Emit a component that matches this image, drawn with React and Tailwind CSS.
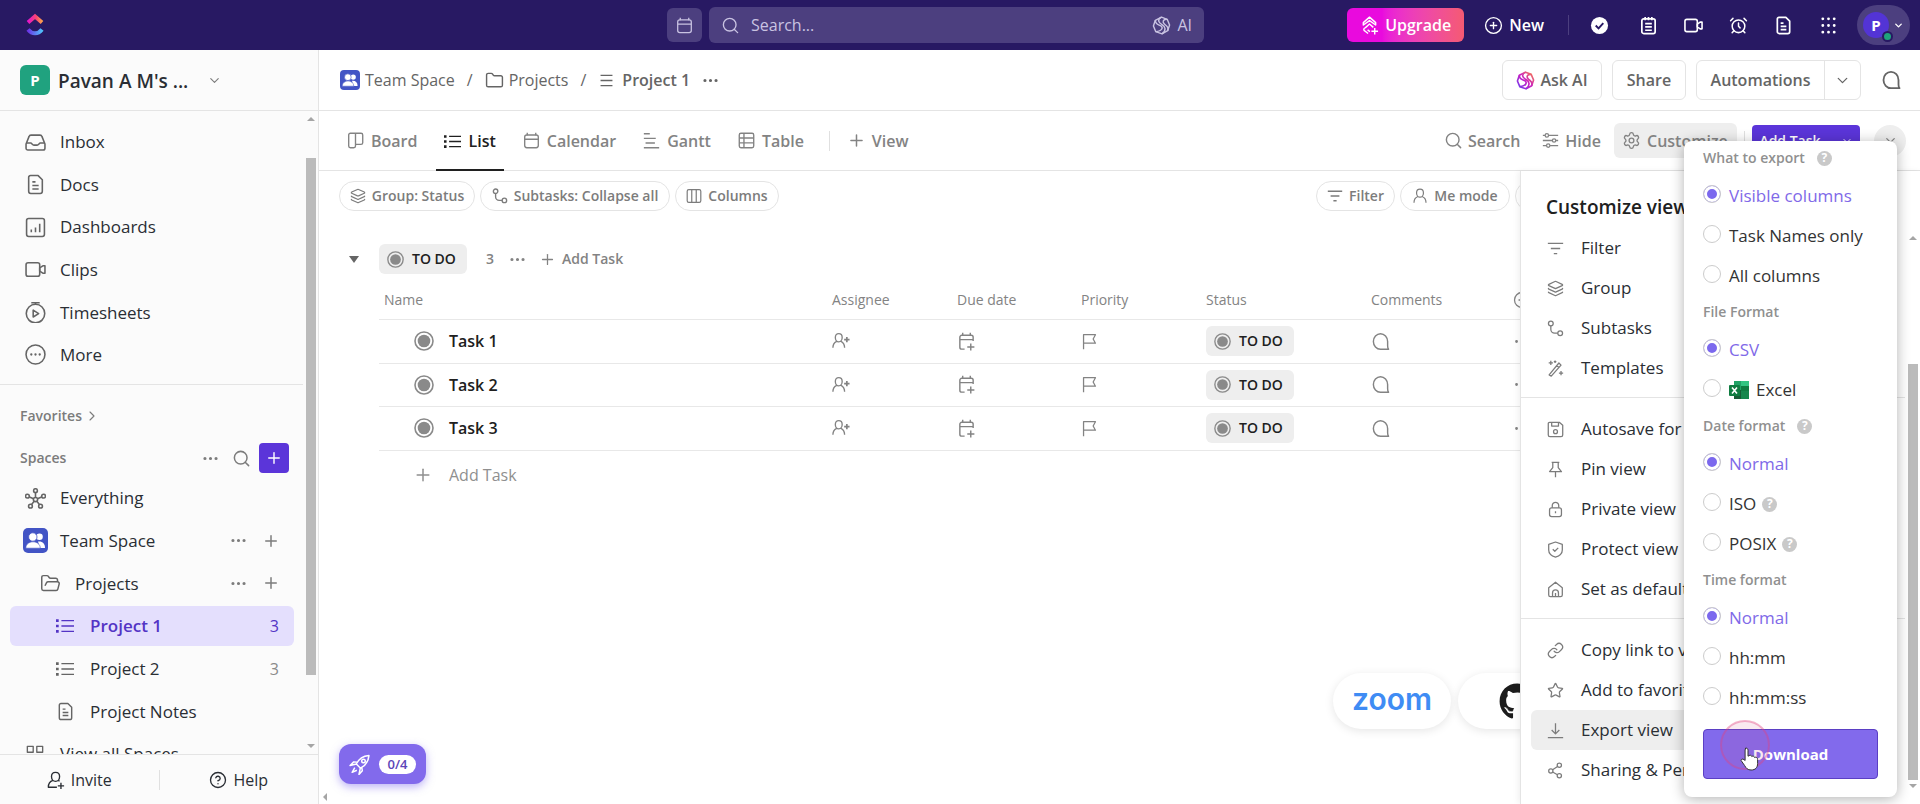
import { useState } from "react";
import {
    AlarmClock, ChevronDown, ChevronRight, CircleHelp, CirclePlus, Ellipsis, Folder, FolderOpen, Layers,
    Link, Plus, Search, Settings, Star,
} from "lucide-react";
import { FaGithub } from "react-icons/fa";

const paths = {
    inbox: <><path d="M1 11.500 3.800 4.400A2 2 0 0 1 5.700 3h8.600a2 2 0 0 1 1.900 1.400L19 11.500V15.500a1.700 1.700 0 0 1-1.700 1.700H2.700A1.700 1.700 0 0 1 1 15.500Z" /><path d="M1.500 10.500h4c1 0 1.500 2 3 2h3c1.500 0 2-2 3-2h4" /></>,
    doc: <><path d="M5.200 1.500h7.300L16.500 5.500V16.500a2 2 0 0 1-2 2h-9a2 2 0 0 1-2-2V3.200A1.700 1.700 0 0 1 5.200 1.500Z" /><path d="M7 7.500h3M7 11h6M7 14.300h6" /></>,
    dashboard: <><rect x="1.500" y="1.500" width="17" height="17" rx="2" /><path d="M6 12v2.500M10 10v4.500M14 6.500v8" /></>,
    video: <><rect x="1" y="3.500" width="13" height="13" rx="2" /><path d="M14 8.500 17 6.500h2v7h-2l-3-2Z" /></>,
    timesheet: <><circle cx="10" cy="11" r="8.800" /><path d="M6 .600h8M10 .600v2M7.800 7.700v6.600l5.200-3.300Z" /></>,
    more: <><circle cx="10" cy="10" r="9" /><path strokeWidth="2.200" strokeLinecap="round" d="M6 10h.01M10 10h.01M14 10h.01" /></>,
    everything: <><circle cx="10" cy="11" r="2" /><circle cx="10" cy="2.500" r="1.800" /><circle cx="2.300" cy="7.800" r="1.800" /><circle cx="17.700" cy="7.800" r="1.800" /><circle cx="5.200" cy="17.300" r="1.800" /><circle cx="14.800" cy="17.300" r="1.800" /><path d="M10 4.500V9M4.200 8.500l4 1.700M15.800 8.500l-4 1.700M6.300 15.700l2.400-3M13.700 15.700l-2.400-3" /></>,
    list: <><path d="M6 4h14M6 10h14M6 16h14" /><path strokeWidth="3" d="M0 4h3M0 10h3M0 16h3" /></>,
    lines: <path d="M3 4h14M3 10h14M3 16h14" />,
    spaces: <><rect x="1.500" y="1.500" width="6.500" height="6.500" /><rect x="12" y="1.500" width="6.500" height="6.500" /><rect x="1.500" y="12" width="6.500" height="6.500" /><rect x="12" y="12" width="6.500" height="6.500" /></>,
    board: <path d="M10 1.500h6.500a2 2 0 0 1 2 2v9a2 2 0 0 1-2 2H10ZM10 1.500H4a2 2 0 0 0-2 2v13a2 2 0 0 0 2 2h4a2 2 0 0 0 2-2Z" />,
    calendar: <><rect x="2" y="3.500" width="16" height="15" rx="2.500" /><path d="M2 8.500h16M5 .800v3M15 .800v3" /></>,
    calendarPlus: <><path d="M17 9.500V5.500A2 2 0 0 0 15 3.500H5a2 2 0 0 0-2 2V16a2 2 0 0 0 2 2h3M3 8h14M6 .800v3M14 .800v3M14.500 12v7.500M10.800 15.800h7.500" /></>,
    gantt: <path d="M1 2h7M1 7.500h14M3 13h11M1 18.500h18" />,
    table: <><rect x="1.500" y="1.500" width="17" height="17" rx="2" /><path d="M1.500 7h17M1.500 12.800h17M7 1.500v17" /></>,
    columns: <><rect x="1.500" y="2" width="17" height="16" rx="2" /><path d="M7.200 2v16M12.800 2v16" /></>,
    filter: <path d="M1 4h18M4.500 10h11M8 16h4" />,
    subtasks: <><circle cx="4.500" cy="4" r="2.800" /><circle cx="15.500" cy="15.500" r="2.800" /><path d="M4.500 6.800V11a4.500 4.500 0 0 0 4.500 4.500h3.700" /></>,
    sliders: <><path d="M1 4h2.500M8 4h11M1 10h11M16.500 10H19M1 16h4M9.500 16H19" /><circle cx="5.700" cy="4" r="2" /><circle cx="14.200" cy="10" r="2" /><circle cx="7.300" cy="16" r="2" /></>,
    user: <path d="M10 1.500c2.800 0 4.300 2 4.300 4.700S12.500 11.500 10 11.500 5.700 9 5.700 6.200 7.200 1.500 10 1.500ZM7 11c-3 1-4.500 3.500-4.500 7.500M13 11c3 1 4.500 3.500 4.500 7.500" />,
    userPlus: <><path d="M7.500 1.800c2.500 0 3.800 1.800 3.800 4.200S9.800 11 7.500 11 3.700 8.500 3.700 6 5 1.800 7.500 1.800ZM5 10.500C2.300 12 1 14 1 17.500M10 10.500c2.700 1.500 4 3.500 4 7" /><path strokeWidth="1.900" d="M16.500 5.500v6M13.500 8.500h6" /></>,
    invite: <path d="M9.500 1.500c3 0 4.500 2 4.500 4.500 0 3-1.800 5.500-4.500 5.500S5 9 5 6c0-2.500 1.500-4.500 4.500-4.500ZM6.500 10.500C3.500 11.500 1.500 14 1.500 18H11M12.500 10.500 14 11.300M15.500 13v7M12 16.500h7" />,
    flag: <path d="M3 19V2h14l-2.700 5L17 12H3" />,
    chat: <path d="M17.500 14.500V10A7.500 8.200 0 1 0 10 18.200h8.500c-.7-.8-1-2-1-3.700Z" />,
    home: <path d="M2 8l8-6.500L18 8v8.500a2 2 0 0 1-2 2H4a2 2 0 0 1-2-2ZM6.500 18v-4a3.500 3.500 0 0 1 7 0v4M10 14v4" />,
    download: <path d="M10 1.500v12M5.500 9.500l4.500 4.500 4.500-4.500M1 18.500h18" />,
    save: <><path d="M3 1.500h11.500L18.500 5v11.500a2 2 0 0 1-2 2h-13a2 2 0 0 1-2-2V3A1.500 1.500 0 0 1 3 1.500ZM5.500 1.500V6h8V1.500" /><circle cx="10" cy="12.500" r="2.300" /></>,
    pin: <path d="M5.500 1.500h9M6.800 1.500v6.200L3 12.500h14l-3.800-4.800V1.500M10 12.500v6.500" />,
    lock: <><rect x="3" y="8" width="14" height="10.500" rx="2.500" /><path d="M6.200 8V5.300a3.800 3.800 0 0 1 7.600 0V8M10 12v2.500" /></>,
    shield: <path d="M10 1.200 18 4v6.500c0 4-3.500 7-8 8.500-4.500-1.500-8-4.500-8-8.500V4ZM6.800 9.800l2.400 2.300 4-4" />,
    share: <><circle cx="14.500" cy="3.800" r="2.500" /><circle cx="4.500" cy="10.500" r="2.500" /><circle cx="14.500" cy="16.200" r="2.500" /><path d="m6.600 9.100 5.800-3.900M6.600 11.700l5.700 3.300" /></>,
    wand: <path d="M2.500 17.500 14 3.500l2.500 2.500L5 19ZM11.500 6.500l2.500 2.500M4.500 1v5M2 3.500h5M9.500.5v3M8 2h3M16.500 13v5M14 15.500h5" />,
    rocket: <><path d="M7 9.500C9.500 4.500 13.500 2 19 1.500c-.5 5.500-3 9.500-8 12ZM7 9.500l4 4M8 7.800 4.500 7.500 1 11l6-1.500M12.200 12.700l.5 3.300L9.500 19.500l1.200-5.700M5.500 13 3 17.500l4.500-2" /><circle cx="13.800" cy="6.700" r="1.700" /></>,
    ai: <><path d="M10 1.200 16 3.500 18.500 9.500 16.500 15.500 10.500 18.800 4 16.500 1.500 10.500 3.500 4.500Z" strokeLinejoin="round" /><path d="M10 1.200C5 4 7 7 10.500 9s5 6 0 9.800M3.500 4.500c0 5 4 4.500 6 6s2 5-5.500 6M16 3.500c-5 0-5 3-3 5s5 2.500 3.500 7" /></>,
    notepad: <><rect x="3" y="3" width="14" height="15.500" rx="2" /><path d="M6.500 1v3.500M10 1v3.500M13.500 1v3.500M6.500 8h7M6.500 11.500h7M6.500 15h7" /></>,
    upgrade: <path d="M3.500 9.500V7L10 1.200 16.500 7v2.500L10 4.800ZM5.500 12.500 10 8.500l4 3.500M5.500 12.500c-2 .5-2 3 0 3.500l3 2.500M8 14.500c1 1 1.500 1.500 2.500 2M15.500 12.500v7M12 16h7" />,
};

function Icon({ name, size = "size-4", color = "", width = 1.500 }) {
    return (
        <svg viewBox="0 0 20 20" fill="none" stroke="currentColor" strokeWidth={width} strokeLinejoin="round" aria-hidden="true"
            className={`shrink-0 ${size} ${color}`}>{paths[name]}</svg>
    );
}

function StatusDot({ className }) {
    return (
        <svg viewBox="0 0 20 20" className={`shrink-0 text-[#8a8a8a] ${className}`} aria-hidden="true">
            <circle cx="10" cy="10" r="9" fill="none" stroke="currentColor" strokeWidth="1.600" />
            <circle cx="10" cy="10" r="6.300" fill="currentColor" />
        </svg>
    );
}

function TeamIcon({ className }) {
    return (
        <svg viewBox="0 0 25 25" className={`shrink-0 ${className}`} aria-hidden="true">
            <rect width="25" height="25" rx="5" fill="#4254c5" />
            <g fill="#fff">
                <circle cx="16.500" cy="8.800" r="3.300" /><path d="M15 13.500c4.500-.5 7 2 7 6.500h-5Z" />
                <circle cx="9.800" cy="9" r="4.200" stroke="#4254c5" strokeWidth=".8" />
                <path d="M2.800 20.200c0-8.500 14.500-8.500 14.500 0Z" stroke="#4254c5" strokeWidth=".6" />
            </g>
        </svg>
    );
}

function Arrow({ dir }) {
    const d = { up: "M0 6 4 2l4 4Z", down: "M0 2h8L4 6Z", left: "M6 0v8L2 4Z" };
    return <svg viewBox="0 0 8 8" className="size-2 fill-[#a5a5a5]" aria-hidden="true"><path d={d[dir]} /></svg>;
}

function TopBar() {
    return (
        <header className="grid h-[50px] shrink-0 grid-cols-[1fr_auto_1fr] items-center bg-[#281963] text-white">
            <a href="#home" aria-label="Home" className="ml-[25px] w-5">
                <svg viewBox="0 0 20 24" className="h-6 w-5">
                    <defs>
                        <linearGradient id="logoTop"><stop stopColor="#e614cb" /><stop offset=".6" stopColor="#f8486f" /><stop offset="1" stopColor="#fca34d" /></linearGradient>
                        <linearGradient id="logoBottom"><stop stopColor="#6b35e8" /><stop offset="1" stopColor="#50c0fc" /></linearGradient>
                    </defs>
                    <path d="M3 9.500 10 3.500l7 6" fill="none" stroke="url(#logoTop)" strokeWidth="4" />
                    <path d="M3 16.500c4 5 10 5 14 0" fill="none" stroke="url(#logoBottom)" strokeWidth="4" />
                </svg>
            </a>
            <div className="mr-[49px] flex items-center gap-[7px]">
                <button aria-label="Calendar" className="flex h-[34px] w-[35px] items-center justify-center rounded-md bg-[#4c3f7f] text-[#c9c3e2]"><Icon name="calendar" size="size-[17px]" /></button>
                <div className="flex h-9 w-[495px] items-center rounded-md bg-[#4c3f7f] px-3 text-[#c9c3e2]">
                    <Search className="size-[19px]" strokeWidth={1.700} />
                    <input aria-label="Search" placeholder="Search..." className="ml-[11px] min-w-0 flex-1 bg-transparent text-base outline-none placeholder:text-[#c9c3e2]" />
                    <button className="flex items-center gap-[6px] text-base"><Icon name="ai" size="size-[19px]" />AI</button>
                </div>
            </div>
            <div className="flex items-center justify-end pr-[10px]">
                <button className="flex h-[34px] w-[117px] items-center justify-center gap-[6px] rounded-md bg-linear-to-r from-[#e90ade] from-30% to-[#f55a72] text-base font-semibold"><Icon name="upgrade" size="size-[19px]" />Upgrade</button>
                <button className="ml-5 flex items-center gap-[6px] text-base font-semibold"><CirclePlus className="size-[19px]" strokeWidth={1.700} />New</button>
                <span className="ml-6 h-5 w-px bg-[#4c3f7f]" />
                <div className="ml-[21px] flex items-center gap-[26px]">
                    <button aria-label="Tasks" className="mr-1 block"><svg viewBox="0 0 20 20" className="size-[19px]"><circle cx="10" cy="10" r="9" fill="#fff" /><path d="m6 10 3 3 5-5.500" fill="none" stroke="#281963" strokeWidth="2" /></svg></button>
                    <button aria-label="Notepad"><Icon name="notepad" size="size-[19px]" width={1.800} /></button>
                    <button aria-label="Record"><Icon name="video" size="size-[19px]" width={1.700} /></button>
                    <button aria-label="Reminders"><AlarmClock className="size-[19px]" strokeWidth={1.900} /></button>
                    <button aria-label="Docs"><Icon name="doc" size="size-[19px]" width={1.800} /></button>
                    <button aria-label="Apps"><svg viewBox="0 0 20 20" className="size-[19px]"><path d="M4 3h.01M10 3h.01M16 3h.01M4 10h.01M10 10h.01M16 10h.01M4 17h.01M10 17h.01M16 17h.01" stroke="#fff" strokeWidth="3" strokeLinecap="round" /></svg></button>
                </div>
                <button aria-label="Account" className="ml-[19px] flex h-10 w-[53px] items-center justify-between rounded-full bg-[#4c3f7f] px-[6px]">
                    <span className="relative flex size-[26px] items-center justify-center rounded-full bg-[#5334d5] text-[15px] font-bold">P
                        <span className="absolute -right-1 -bottom-1 size-[11px] rounded-full border-2 border-[#281963] bg-[#1fa37c]" /></span>
                    <ChevronDown className="size-[11px]" strokeWidth={3} />
                </button>
            </div>
        </header>
    );
}

const navItems = [
    ["Inbox", "inbox"], ["Docs", "doc"], ["Dashboards", "dashboard"], ["Clips", "video"], ["Timesheets", "timesheet"], ["More", "more"],
];

function RowActions() {
    return (
        <span className="ml-auto flex items-center gap-[14px] pr-[14px] text-[#7c7c7c]">
            <button aria-label="Options"><Ellipsis className="size-[19px]" strokeWidth={2} /></button>
            <button aria-label="Add"><Plus className="size-[18px]" strokeWidth={2} /></button>
        </span>
    );
}

function Sidebar() {
    return (
        <aside className="flex w-[319px] shrink-0 flex-col border-r border-[#e4e4e4] bg-[#fbfbfb] text-[#2a2e34]">
            <button className="flex h-[61px] shrink-0 items-center border-b border-[#e4e4e4] pl-5">
                <span className="flex size-[30px] items-center justify-center rounded-md bg-[#20a27f] text-[15px] font-bold text-white">P</span>
                <span className="ml-2 w-[149px] pt-[3px] text-left text-[19px] font-semibold whitespace-nowrap">Pavan A M's ...</span>
                <ChevronDown className="size-[15px] text-[#7c7c7c]" strokeWidth={1.800} />
            </button>
            <div className="flex min-h-0 flex-1">
                <div className="min-w-0 flex-1 overflow-hidden text-[17px]">
                    <nav className="flex h-[274px] flex-col justify-between border-b border-[#e4e4e4] pt-[11px] pb-[9px]">
                        {navItems.map(([label, icon]) => (
                            <a key={label} href="#nav" className="flex h-10 items-center gap-[14px] pl-[25px]">
                                <Icon name={icon} size="size-[21px]" color="text-[#656565]" />{label}
                            </a>
                        ))}
                    </nav>
                    <button className="mt-[19px] flex h-6 items-center gap-[2px] pl-5 text-sm font-semibold text-[#7c7c7c]">Favorites <ChevronRight className="size-4" strokeWidth={1.700} /></button>
                    <div className="mt-[15px] flex h-[30px] items-center pr-[14px] pl-5 text-[#7c7c7c]">
                        <h2 className="flex-1 text-sm font-semibold">Spaces</h2>
                        <button aria-label="Space options"><Ellipsis className="size-[19px]" /></button>
                        <button aria-label="Search spaces" className="ml-3"><Search className="size-[19px]" strokeWidth={1.900} /></button>
                        <button aria-label="New space" className="ml-[8px] flex size-[30px] items-center justify-center rounded bg-[#5b35d9] text-white"><Plus className="size-[18px]" strokeWidth={1.900} /></button>
                    </div>
                    <ul className="mt-[5px] flex h-[296px] flex-col justify-between pr-[9px] [&>li]:flex [&>li]:h-10 [&>li]:items-center">
                        <li className="pl-[25px]"><Icon name="everything" size="size-[21px]" color="text-[#656565]" /><a href="#e" className="ml-[14px]">Everything</a></li>
                        <li className="pl-[23px]"><TeamIcon className="size-[25px]" /><a href="#t" className="ml-3">Team Space</a><RowActions /></li>
                        <li className="pl-[40px]"><FolderOpen className="size-[21px] text-[#656565]" strokeWidth={1.700} /><a href="#p" className="ml-[14px]">Projects</a><RowActions /></li>
                        <li className="ml-[10px] rounded-md bg-[#e4dffd] pr-[15px] pl-[46px] text-[#5334c5]"><Icon name="list" size="size-[18px]" /><a href="#p1" className="ml-[16px] flex-1 font-semibold">Project 1</a><span className="text-base">3</span></li>
                        <li className="pr-[15px] pl-[56px]"><Icon name="list" size="size-[18px]" color="text-[#656565]" /><a href="#p2" className="ml-[16px] flex-1">Project 2</a><span className="text-base text-[#8a8a8a]">3</span></li>
                        <li className="pl-[56px]"><Icon name="doc" size="size-[19px]" color="text-[#656565]" /><a href="#n" className="ml-[15px]">Project Notes</a></li>
                        <li className="shrink-0 pl-[26px]"><Icon name="spaces" size="size-[18px]" color="text-[#656565]" /><a href="#v" className="ml-4">View all Spaces</a></li>
                    </ul>
                </div>
                <div className="flex w-[15px] shrink-0 flex-col items-center justify-between pt-1 pb-1">
                    <Arrow dir="up" />
                    <div className="mt-[35px] mb-[67px] w-[10px] flex-1 bg-[#bbb]" />
                    <Arrow dir="down" />
                </div>
            </div>
            <div className="flex h-[50px] shrink-0 items-center border-t border-[#e4e4e4] text-base">
                <button className="flex flex-1 items-center justify-center gap-[6px]"><Icon name="invite" size="size-[18px]" />Invite</button>
                <span className="h-5 w-px bg-[#e0e0e0]" />
                <button className="flex flex-1 items-center justify-center gap-[6px]"><CircleHelp className="size-[18px]" strokeWidth={1.800} />Help</button>
            </div>
        </aside>
    );
}

function Breadcrumb() {
    const box = "flex h-10 items-center rounded-md border border-[#e4e4e4]";
    return (
        <div className="flex h-[61px] shrink-0 items-center border-b border-[#e4e4e4] pr-[19px] pl-[21px] text-base text-[#656565]">
            <a href="#t" className="flex items-center gap-[5px]"><TeamIcon className="size-5" />Team Space</a>
            <span className="mx-3">/</span>
            <a href="#p" className="flex items-center gap-[5px]"><Folder className="size-[19px]" strokeWidth={1.800} />Projects</a>
            <span className="mx-3">/</span>
            <a href="#p1" className="flex items-center gap-[7px] font-semibold"><Icon name="lines" size="size-[17px]" />Project 1</a>
            <button aria-label="Options" className="ml-[11px]"><Ellipsis className="size-[19px]" /></button>
            <div className="ml-auto flex items-center gap-[10px] font-semibold">
                <button className={`${box} w-[100px] justify-center gap-[5px]`}>
                    <svg viewBox="0 0 20 20" fill="none" stroke="url(#aiColor)" strokeWidth="1.700" className="size-[19px]" aria-hidden="true">
                        <defs><linearGradient id="aiColor" gradientUnits="userSpaceOnUse" x1="2" y1="18" x2="18" y2="2"><stop stopColor="#6d3df0" /><stop offset=".5" stopColor="#c81ec2" /><stop offset="1" stopColor="#f77b52" /></linearGradient></defs>
                        {paths.ai}
                    </svg>
                    Ask AI
                </button>
                <button className={`${box} w-[74px] justify-center`}>Share</button>
                <div className={box}>
                    <button className="w-[127px]">Automations</button>
                    <button aria-label="More automations" className="flex h-full w-9 items-center justify-center border-l border-[#e4e4e4]"><ChevronDown className="size-[17px]" strokeWidth={1.800} /></button>
                </div>
                <button aria-label="Comments" className="ml-[10px]"><Icon name="chat" size="size-5" width={1.800} /></button>
            </div>
        </div>
    );
}

function ViewTabs() {
    const tabs = [["Board", "board"], ["List", "list"], ["Calendar", "calendar"], ["Gantt", "gantt"], ["Table", "table"]];
    return (
        <div className="flex h-[60px] shrink-0 items-center border-b border-[#e4e4e4] pr-[14px] pl-5 text-base font-semibold text-[#838383]">
            <div className="flex h-full gap-[11px]">
                {tabs.map(([label, icon]) => (
                    <button key={label} className={label === "List" ? "-mb-px flex h-[60px] items-center gap-[7px] border-b-2 border-[#202020] px-2 pt-[2px] text-[#202020]" : "flex items-center gap-[7px] px-2"}>
                        <Icon name={icon} size="size-[17px]" width={1.600} />{label}
                    </button>
                ))}
            </div>
            <span className="mx-[17px] h-5 w-px bg-[#e0e0e0]" />
            <button className="flex items-center gap-[6px]"><Plus className="size-[19px]" strokeWidth={1.900} />View</button>
            <div className="ml-auto flex items-center">
                <button className="flex items-center gap-[5px]"><Search className="size-[19px]" strokeWidth={1.800} />Search</button>
                <button className="ml-[22px] flex items-center gap-[6px]"><Icon name="sliders" size="size-[17px]" />Hide</button>
                <button className="ml-[13px] flex h-[35px] w-[123px] items-center gap-[6px] rounded-md bg-[#eee] pl-2"><Settings className="size-[19px]" strokeWidth={1.700} />Customize</button>
                <span className="mx-[7px] h-5 w-px bg-[#e0e0e0]" />
                <button className="flex h-[31px] w-[108px] items-center justify-center gap-5 rounded bg-[#5b35d9] text-sm text-white">Add Task <ChevronDown className="size-3" /></button>
                <button aria-label="Collapse" className="ml-[14px] flex size-8 items-center justify-center rounded-full bg-[#eee]"><ChevronDown className="size-[15px]" /></button>
            </div>
        </div>
    );
}

const tasks = ["Task 1", "Task 2", "Task 3"];

function StatusBadge() {
    return <span className="flex h-[30px] w-[88px] items-center gap-2 rounded-md bg-[#eee] pl-2 text-sm font-semibold text-[#202020]"><StatusDot className="size-[17px]" />TO DO</span>;
}

function ListView() {
    const chip = "flex h-[30px] items-center justify-center gap-[6px] rounded-full border border-[#e4e4e4] whitespace-nowrap";
    return (
        <div className="min-h-0 flex-1 overflow-hidden">
            <div className="flex items-center gap-[5px] pt-[10px] pl-5 text-sm font-semibold text-[#7c7c7c]">
                <button className={`${chip} w-[136px]`}><Layers className="size-4" strokeWidth={1.800} />Group: Status</button>
                <button className={`${chip} w-[190px]`}><Icon name="subtasks" width={1.700} />Subtasks: Collapse all</button>
                <button className={`${chip} w-[104px]`}><Icon name="columns" />Columns</button>
                <div className="mr-[309px] ml-auto flex gap-[5px]">
                    <button className={`${chip} w-[79px]`}><Icon name="filter" width={1.700} />Filter</button>
                    <button className={`${chip} w-[110px]`}><Icon name="user" />Me mode</button>
                    <button aria-label="Show closed" className={`${chip} w-[96px]`} />
                </div>
            </div>
            <div className="mt-[33px] flex h-[30px] items-center pl-[30px] text-sm font-semibold text-[#838383]">
                <button aria-label="Collapse group" className="mr-5"><svg viewBox="0 0 10 8" className="h-2 w-[10px] fill-[#656565]"><path d="M0 1h10L5 8Z" /></svg></button>
                <StatusBadge />
                <span className="ml-[19px]">3</span>
                <button aria-label="Group options" className="ml-[14px]"><Ellipsis className="size-[19px]" /></button>
                <button className="ml-[12px] flex items-center gap-[6px]"><Plus className="size-[17px]" strokeWidth={1.800} />Add Task</button>
            </div>
            <table className="mt-[7px] ml-[60px] w-[calc(100%-60px)] table-fixed text-left text-[#838383]">
                <thead>
                    <tr className="h-[38px] border-b border-[#e8e8e8] text-sm [&>th]:pl-[5px] [&>th]:font-normal">
                        <th className="w-[448px]">Name</th>
                        <th className="w-[125px]">Assignee</th>
                        <th className="w-[124px]">Due date</th>
                        <th className="w-[125px]">Priority</th>
                        <th className="w-[165px]">Status</th>
                        <th className="w-[142px]">Comments</th>
                        <th><button aria-label="Add column" className="block"><CirclePlus className="size-[18px]" strokeWidth={1.700} /></button></th>
                    </tr>
                </thead>
                <tbody>
                    {tasks.map((task) => (
                        <tr key={task} className="h-[44px] border-b border-[#e8e8e8] even:h-[43px] [&>td]:pl-[5px]">
                            <td><div className="flex items-center gap-[15px] pl-[30px] text-base font-semibold text-[#202020]"><StatusDot className="size-5" />{task}</div></td>
                            <td><Icon name="userPlus" size="size-[18px]" /></td>
                            <td><Icon name="calendarPlus" size="size-[19px]" /></td>
                            <td><Icon name="flag" size="size-[17px]" /></td>
                            <td><StatusBadge /></td>
                            <td><Icon name="chat" size="size-[19px]" /></td>
                            <td><Ellipsis className="size-[17px]" /></td>
                        </tr>
                    ))}
                </tbody>
            </table>
            <button className="mt-[9px] ml-[94px] flex h-[30px] items-center gap-4 text-base text-[#8f8f8f]"><Plus className="size-5" strokeWidth={1.800} />Add Task</button>
        </div>
    );
}

const panelGroups = [
    [["Filter", <Icon name="filter" />], ["Group", <Layers />], ["Subtasks", <Icon name="subtasks" />], ["Templates", <Icon name="wand" />]],
    [["Autosave for me", <Icon name="save" />], ["Pin view", <Icon name="pin" />], ["Private view", <Icon name="lock" />], ["Protect view", <Icon name="shield" />], ["Set as default view", <Icon name="home" />]],
    [["Copy link to view", <Link />], ["Add to favorites", <Star />], ["Export view", <Icon name="download" />], ["Sharing & Permissions", <Icon name="share" />]],
];

function CustomizePanel() {
    return (
        <aside className="absolute top-[121px] right-0 bottom-0 flex w-[400px] border-l border-[#e4e4e4] bg-white shadow-[-2px_0_6px_rgba(0,0,0,0.06)]">
            <div className="min-w-0 flex-1">
                <h2 className="mt-[22px] mb-[7px] pl-[25px] text-[19px] leading-7 font-semibold text-[#202020]">Customize view</h2>
                {panelGroups.map((group, i) => (
                    <ul key={i} className={i ? "border-t border-[#e4e4e4] pt-[11px] pb-[9px]" : "pb-[9px]"}>
                        {group.map(([label, icon]) => (
                            <li key={label} className="mx-[10px]">
                                <button className={label === "Export view" ? "flex h-10 w-full items-center gap-[17px] rounded-md bg-[#eee] pl-4 text-[17px] text-[#2a2e34]" : "flex h-10 w-full items-center gap-[17px] pl-4 text-[17px] text-[#2a2e34]"}>
                                    <span className="text-[#7c7c7c] [&>.lucide]:stroke-[1.8] [&>svg]:size-[17px]">{icon}</span>{label}
                                </button>
                            </li>
                        ))}
                    </ul>
                ))}
            </div>
            <div className="mt-[63px] mb-[14px] flex w-[15px] shrink-0 flex-col items-center">
                <Arrow dir="up" />
                <div className="mt-[122px] mb-[2px] w-[10px] flex-1 bg-[#bbb]" />
                <Arrow dir="down" />
            </div>
        </aside>
    );
}

function Help() {
    return <span className="flex size-[15px] shrink-0 items-center justify-center rounded-full bg-[#c9c9c9] text-[12px] leading-none font-bold text-white">?</span>;
}

function ExcelIcon() {
    return (
        <svg viewBox="0 0 20 18" className="h-[18px] w-5" aria-hidden="true">
            <path fill="#21a366" d="M5 0h8v9H5z" /><path fill="#33c481" d="M12 0h8v5h-8z" /><path fill="#107c41" d="M12 5h8v5h-8z" />
            <path fill="#185c37" d="M5 9h7v9H5z" /><path fill="#17864c" d="M12 10h8v8h-8z" /><rect y="4" width="11" height="11" rx="1" fill="#107c41" />
            <path d="m3 6.500 5 6M8 6.500l-5 6" stroke="#fff" strokeWidth="1.600" />
        </svg>
    );
}

const exportFields = [
    { name: "what", title: "What to export", help: true, options: [["Visible columns"], ["Task Names only"], ["All columns"]] },
    { name: "file", title: "File Format", options: [["CSV"], ["Excel"]] },
    { name: "date", title: "Date format", help: true, options: [["Normal"], ["ISO", true], ["POSIX", true]] },
    { name: "time", title: "Time format", options: [["Normal"], ["hh:mm"], ["hh:mm:ss"]] },
];

function ExportPopup() {
    const [values, setValues] = useState({ what: "Visible columns", file: "CSV", date: "Normal", time: "Normal" });
    return (
        <form onSubmit={(e) => e.preventDefault()} className="absolute top-[91px] right-[23px] w-[213px] rounded-lg bg-white px-[19px] pt-[7px] pb-[18px] shadow-[0_2px_14px_rgba(0,0,0,0.3)]">
            {exportFields.map((field) => (
                <fieldset key={field.name} className="mb-[6px]">
                    <legend className="flex h-5 items-center gap-3 text-sm font-semibold text-[#909090]">{field.title}{field.help && <Help />}</legend>
                    <div className="pt-2">
                        {field.options.map(([label, help]) => {
                            const checked = values[field.name] === label;
                            return (
                                <label key={label} className={checked ? "flex h-10 items-center text-[17px] text-[#8069e8]" : "flex h-10 items-center text-[17px] text-[#333]"}>
                                    <input type="radio" name={field.name} checked={checked} onChange={() => setValues({ ...values, [field.name]: label })}
                                        className="mr-2 mb-[5px] size-[18px] shrink-0 appearance-none rounded-full border border-[#ccc] bg-white checked:bg-[#7b68ee] checked:shadow-[inset_0_0_0_3px_#fff]" />
                                    {label === "Excel" && <span className="mr-[7px]"><ExcelIcon /></span>}
                                    {label}
                                    {help && <span className="ml-[6px]"><Help /></span>}
                                </label>
                            );
                        })}
                    </div>
                </fieldset>
            ))}
            <button type="submit" className="mt-[5px] h-[50px] w-full rounded-sm border border-[#5b3fc4] bg-[#826aec] text-[15px] font-bold text-white">Download</button>
            <svg viewBox="0 0 56 56" className="pointer-events-none absolute bottom-6 left-[33px] size-14" aria-hidden="true">
                <circle cx="28" cy="28" r="24" fill="#d05a9022" stroke="#e0408066" strokeWidth="2" />
                <path d="M28 31.500c1.700-1 3 0 3 1.700v6l1-.5c1.200-1 2.500-.3 2.800.8 1-.8 2.500-.3 2.800 1 1.500-.8 3 0 3 2v4c0 4-2 6.500-6.500 6.500-3.500 0-5-1.800-6.500-4.500l-3.500-5c0-1.500 1.500-2 3-.8l1 .8V33c0-.7.3-1.200.9-1.500Z" fill="#fff" stroke="#333" strokeWidth="1" />
            </svg>
        </form>
    );
}

export default function App() {
    return (
        <div className="flex h-screen flex-col overflow-hidden bg-white font-['Open_Sans',sans-serif]">
            <TopBar />
            <div className="flex min-h-0 flex-1">
                <Sidebar />
                <main className="relative flex min-w-0 flex-1 flex-col">
                    <Breadcrumb />
                    <ViewTabs />
                    <ListView />
                    <button className="absolute bottom-5 left-5 flex h-10 w-[87px] items-center justify-center gap-[9px] rounded-xl bg-[#826aec] text-white shadow-[0_3px_8px_rgba(123,104,238,0.5)]">
                        <Icon name="rocket" size="size-[21px]" width={1.400} /><span className="w-[37px] rounded-full bg-white text-[13px] leading-[19px] font-semibold text-[#5b45b8]">0/4</span>
                    </button>
                    <span className="absolute bottom-[3px] left-[2px]"><Arrow dir="left" /></span>
                    <div className="absolute right-[344px] bottom-[75px] flex gap-[7px]">
                        <a href="#zoom" className="flex h-14 w-[118px] items-center justify-center rounded-full bg-white pb-[5px] font-['Inter',sans-serif] text-[30px] leading-none font-semibold text-[#3f8cf4] shadow-[0_2px_10px_rgba(0,0,0,0.1)]">zoom</a>
                        <a href="#github" aria-label="GitHub" className="flex h-14 w-[118px] items-center justify-center rounded-full bg-white text-[#1c1c1c] shadow-[0_2px_10px_rgba(0,0,0,0.1)]"><FaGithub className="size-[37px]" /></a>
                    </div>
                    <CustomizePanel />
                    <ExportPopup />
                </main>
            </div>
        </div>
    );
}
